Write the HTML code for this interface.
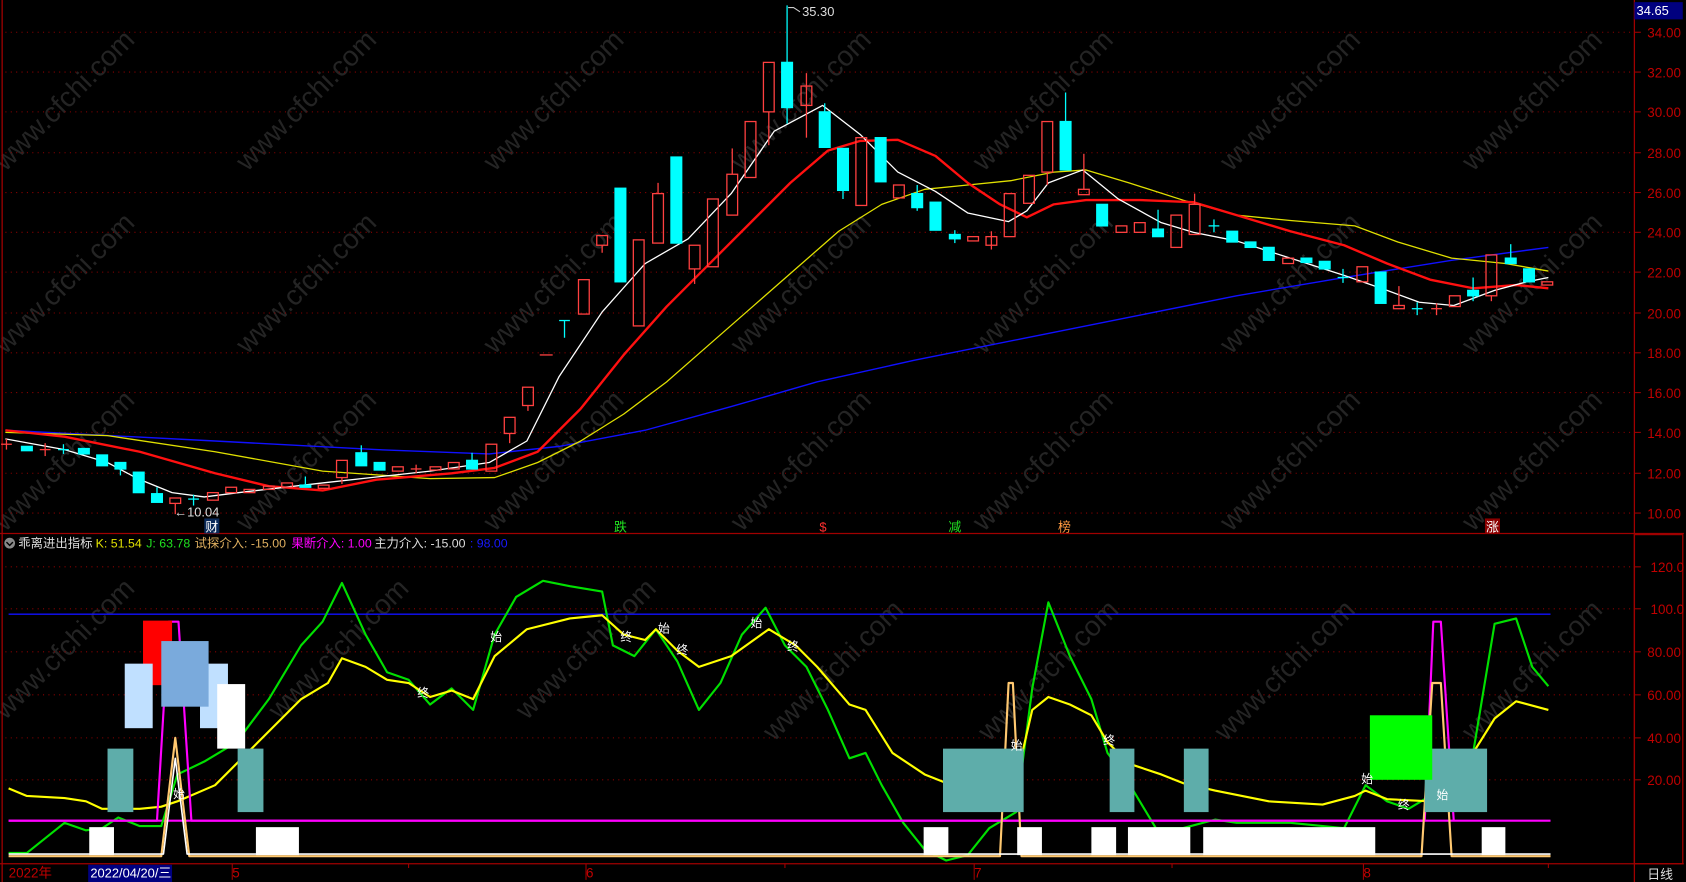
<!DOCTYPE html>
<html><head><meta charset="utf-8"><style>
html,body{margin:0;padding:0;background:#000;overflow:hidden}
svg{display:block}
text{font-family:"Liberation Sans","Noto Sans CJK SC",sans-serif}
</style></head><body>
<svg width="1686" height="882" viewBox="0 0 1568 820" preserveAspectRatio="none" xmlns="http://www.w3.org/2000/svg">
<rect width="1568" height="820" fill="#000"/>
<!-- watermarks -->
<g fill="#242424" font-size="26" font-family="Liberation Sans,sans-serif">
<text transform="translate(5,160) rotate(-45)">www.cfchi.com</text>
<text transform="translate(230,160) rotate(-45)">www.cfchi.com</text>
<text transform="translate(460,160) rotate(-45)">www.cfchi.com</text>
<text transform="translate(690,160) rotate(-45)">www.cfchi.com</text>
<text transform="translate(915,160) rotate(-45)">www.cfchi.com</text>
<text transform="translate(1145,160) rotate(-45)">www.cfchi.com</text>
<text transform="translate(1370,160) rotate(-45)">www.cfchi.com</text>
<text transform="translate(5,330) rotate(-45)">www.cfchi.com</text>
<text transform="translate(230,330) rotate(-45)">www.cfchi.com</text>
<text transform="translate(460,330) rotate(-45)">www.cfchi.com</text>
<text transform="translate(690,330) rotate(-45)">www.cfchi.com</text>
<text transform="translate(915,330) rotate(-45)">www.cfchi.com</text>
<text transform="translate(1145,330) rotate(-45)">www.cfchi.com</text>
<text transform="translate(1370,330) rotate(-45)">www.cfchi.com</text>
<text transform="translate(5,495) rotate(-45)">www.cfchi.com</text>
<text transform="translate(230,495) rotate(-45)">www.cfchi.com</text>
<text transform="translate(460,495) rotate(-45)">www.cfchi.com</text>
<text transform="translate(690,495) rotate(-45)">www.cfchi.com</text>
<text transform="translate(915,495) rotate(-45)">www.cfchi.com</text>
<text transform="translate(1145,495) rotate(-45)">www.cfchi.com</text>
<text transform="translate(1370,495) rotate(-45)">www.cfchi.com</text>
<text transform="translate(5,670) rotate(-45)">www.cfchi.com</text>
<text transform="translate(260,670) rotate(-45)">www.cfchi.com</text>
<text transform="translate(490,670) rotate(-45)">www.cfchi.com</text>
<text transform="translate(720,690) rotate(-45)">www.cfchi.com</text>
<text transform="translate(920,690) rotate(-45)">www.cfchi.com</text>
<text transform="translate(1140,690) rotate(-45)">www.cfchi.com</text>
<text transform="translate(1370,690) rotate(-45)">www.cfchi.com</text>
</g>
<!-- grid -->
<g stroke="#8b0000" stroke-width="1" stroke-dasharray="1,4">
<line x1="5" x2="1520" y1="30" y2="30"/><line x1="5" x2="1520" y1="67" y2="67"/><line x1="5" x2="1520" y1="104" y2="104"/><line x1="5" x2="1520" y1="142" y2="142"/><line x1="5" x2="1520" y1="179" y2="179"/><line x1="5" x2="1520" y1="216" y2="216"/><line x1="5" x2="1520" y1="253" y2="253"/><line x1="5" x2="1520" y1="291" y2="291"/><line x1="5" x2="1520" y1="328" y2="328"/><line x1="5" x2="1520" y1="365" y2="365"/><line x1="5" x2="1520" y1="402" y2="402"/><line x1="5" x2="1520" y1="440" y2="440"/><line x1="5" x2="1520" y1="477" y2="477"/>
<line x1="5" x2="1520" y1="527" y2="527"/><line x1="5" x2="1520" y1="566" y2="566"/><line x1="5" x2="1520" y1="606" y2="606"/><line x1="5" x2="1520" y1="646" y2="646"/><line x1="5" x2="1520" y1="686" y2="686"/><line x1="5" x2="1520" y1="725" y2="725"/>
</g>
<!-- frame -->
<g stroke="#a00000" fill="none" stroke-width="1.2">
<line x1="2" y1="0" x2="2" y2="820"/>
<line x1="1520" y1="0" x2="1520" y2="820"/>
<line x1="0" y1="496" x2="1566" y2="496"/>
<line x1="0" y1="803" x2="1566" y2="803"/>
<rect x="1520" y="497" width="45" height="306"/>
</g>
<g stroke="#a00000">
<line x1="1520" x2="1526" y1="30" y2="30"/><line x1="1520" x2="1526" y1="67" y2="67"/><line x1="1520" x2="1526" y1="104" y2="104"/><line x1="1520" x2="1526" y1="142" y2="142"/><line x1="1520" x2="1526" y1="179" y2="179"/><line x1="1520" x2="1526" y1="216" y2="216"/><line x1="1520" x2="1526" y1="253" y2="253"/><line x1="1520" x2="1526" y1="291" y2="291"/><line x1="1520" x2="1526" y1="328" y2="328"/><line x1="1520" x2="1526" y1="365" y2="365"/><line x1="1520" x2="1526" y1="402" y2="402"/><line x1="1520" x2="1526" y1="440" y2="440"/><line x1="1520" x2="1526" y1="477" y2="477"/>
<line x1="1520" x2="1526" y1="527" y2="527"/><line x1="1520" x2="1526" y1="566" y2="566"/><line x1="1520" x2="1526" y1="606" y2="606"/><line x1="1520" x2="1526" y1="646" y2="646"/><line x1="1520" x2="1526" y1="686" y2="686"/><line x1="1520" x2="1526" y1="725" y2="725"/>
<line x1="216" x2="216" y1="803" y2="818"/><line x1="545" x2="545" y1="803" y2="818"/><line x1="906" x2="906" y1="803" y2="818"/><line x1="1268" x2="1268" y1="803" y2="818"/>
<line x1="380" x2="380" y1="803" y2="807"/><line x1="730" x2="730" y1="803" y2="807"/><line x1="1090" x2="1090" y1="803" y2="807"/><line x1="1440" x2="1440" y1="803" y2="807"/>
</g>
<!-- axis labels -->
<g fill="#c00000" font-size="12.5">
<text x="1532" y="35">34.00</text><text x="1532" y="72">32.00</text><text x="1532" y="109">30.00</text><text x="1532" y="147">28.00</text><text x="1532" y="184">26.00</text><text x="1532" y="221">24.00</text><text x="1532" y="258">22.00</text><text x="1532" y="296">20.00</text><text x="1532" y="333">18.00</text><text x="1532" y="370">16.00</text><text x="1532" y="407">14.00</text><text x="1532" y="445">12.00</text><text x="1532" y="482">10.00</text>
<text x="1535" y="532">120.0</text><text x="1535" y="571">100.0</text><text x="1532" y="611">80.00</text><text x="1532" y="651">60.00</text><text x="1532" y="691">40.00</text><text x="1532" y="730">20.00</text>
<text x="8" y="816">2022年</text><text x="216" y="816">5</text><text x="545" y="816">6</text><text x="906" y="816">7</text><text x="1268" y="816">8</text>
</g>
<rect x="1520" y="2" width="45" height="16" fill="#00007f"/>
<text x="1522" y="14" fill="#fff" font-size="12">34.65</text>
<rect x="82" y="804" width="78" height="16" fill="#000080"/>
<text x="84" y="816" fill="#fff" font-size="12">2022/04/20/三</text>
<text x="1532" y="817" fill="#ddd" font-size="12">日线</text>

<!-- MAs -->
<g fill="none" stroke-linejoin="round">
<polyline stroke="#1010ff" stroke-width="1.3" points="5,400 200,410 350,418 455,422 520,415 600,400 680,378 760,355 850,335 950,315 1050,295 1150,275 1250,258 1350,242 1440,230"/>
<polyline stroke="#e0e000" stroke-width="1.2" points="5,402 100,405 200,420 300,438 400,445 460,444 500,430 540,410 580,385 620,355 660,320 700,285 740,250 780,215 820,190 860,176 900,172 940,168 980,160 1010,158 1050,170 1100,186 1150,200 1200,205 1260,210 1300,225 1350,240 1400,245 1440,252"/>
<polyline stroke="#ff1010" stroke-width="2.2" points="5,400 60,406 130,420 200,440 250,452 300,456 350,446 420,440 460,435 500,420 540,380 580,330 620,285 660,245 700,205 735,170 770,140 800,131 835,130 870,145 900,170 930,190 955,202 980,190 1010,186 1060,186 1110,188 1150,200 1200,215 1250,228 1290,245 1330,260 1370,268 1410,265 1440,268"/>
<polyline stroke="#ffffff" stroke-width="1.2" points="5,408 60,418 100,430 128,445 160,458 190,462 230,457 300,449 400,438 455,430 490,410 520,350 560,290 600,245 640,222 680,180 720,122 765,98 800,125 835,160 870,178 900,198 938,206 955,196 975,170 1007,158 1040,185 1080,207 1110,216 1150,224 1200,240 1250,256 1290,270 1320,281 1352,284 1390,270 1420,262 1440,258"/>
</g>

<!-- candles -->
<g stroke-width="1.2">
<g stroke="#ff4040" fill="none">
<line x1="6" y1="408" x2="6" y2="418"/><line x1="1" y1="413" x2="11" y2="413"/>
<line x1="42" y1="412" x2="42" y2="424"/><line x1="37" y1="418" x2="47" y2="418"/>
<line x1="163" y1="468" x2="163" y2="478"/><rect x="158" y="463" width="10" height="5"/>
<rect x="193" y="458" width="10" height="7"/><rect x="210" y="453" width="10" height="5"/><rect x="227" y="455" width="10" height="3"/><rect x="245" y="452" width="10" height="3"/><rect x="262" y="449" width="10" height="4"/><rect x="296" y="451" width="10" height="3"/>
<rect x="313" y="428" width="10" height="16"/><line x1="318" y1="444" x2="318" y2="450"/>
<rect x="365" y="434" width="10" height="4"/><line x1="382" y1="436" x2="392" y2="436"/><line x1="387" y1="432" x2="387" y2="440"/><rect x="400" y="434" width="10" height="3"/><rect x="417" y="430" width="10" height="6"/>
<rect x="452" y="413" width="10" height="25"/><rect x="469" y="388" width="10" height="15"/><line x1="474" y1="403" x2="474" y2="412"/>
<rect x="486" y="360" width="10" height="17"/><line x1="491" y1="377" x2="491" y2="382"/>
<line x1="502" y1="330" x2="514" y2="330"/>
<rect x="538" y="260" width="10" height="32"/><rect x="555" y="219" width="10" height="9"/><line x1="560" y1="228" x2="560" y2="235"/>
<rect x="589" y="223" width="10" height="80"/><rect x="607" y="180" width="10" height="46"/><line x1="612" y1="170" x2="612" y2="180"/>
<rect x="641" y="228" width="10" height="22"/><line x1="646" y1="250" x2="646" y2="264"/>
<rect x="658" y="185" width="10" height="63"/><rect x="676" y="162" width="10" height="38"/><line x1="681" y1="138" x2="681" y2="162"/>
<rect x="693" y="113" width="10" height="52"/><rect x="710" y="58" width="10" height="46"/><line x1="715" y1="104" x2="715" y2="135"/>
<rect x="745" y="80" width="10" height="18"/><line x1="750" y1="68" x2="750" y2="128"/>
<rect x="796" y="128" width="10" height="63"/><rect x="831" y="172" width="10" height="12"/>
<rect x="900" y="220" width="10" height="4"/><rect x="917" y="220" width="10" height="8"/><line x1="922" y1="215" x2="922" y2="232"/>
<rect x="934" y="180" width="10" height="40"/><rect x="952" y="163" width="10" height="26"/>
<rect x="969" y="113" width="10" height="47"/><line x1="974" y1="160" x2="974" y2="172"/>
<rect x="1003" y="176" width="10" height="5"/><line x1="1008" y1="143" x2="1008" y2="176"/>
<rect x="1038" y="210" width="10" height="6"/><rect x="1055" y="207" width="10" height="9"/><rect x="1089" y="200" width="10" height="30"/><rect x="1106" y="190" width="10" height="28"/><line x1="1111" y1="180" x2="1111" y2="190"/>
<rect x="1193" y="240" width="10" height="5"/><rect x="1262" y="248" width="10" height="14"/>
<rect x="1296" y="284" width="10" height="3"/><line x1="1301" y1="266" x2="1301" y2="284"/>
<line x1="1331" y1="287" x2="1341" y2="287"/><line x1="1336" y1="282" x2="1336" y2="293"/>
<rect x="1348" y="275" width="10" height="10"/><rect x="1382" y="237" width="10" height="38"/><line x1="1387" y1="275" x2="1387" y2="280"/>
<rect x="1434" y="262" width="10" height="3"/>
</g>
<g fill="#00ffff" stroke="#00ffff">
<rect x="20" y="415" width="10" height="4"/><line x1="54" y1="418" x2="64" y2="418"/><line x1="59" y1="413" x2="59" y2="422"/>
<rect x="73" y="417" width="10" height="5"/><rect x="90" y="423" width="10" height="10"/><rect x="107" y="430" width="10" height="6"/><line x1="112" y1="436" x2="112" y2="442"/>
<rect x="124" y="439" width="10" height="19"/><rect x="141" y="459" width="10" height="8"/><line x1="146" y1="453" x2="146" y2="459"/>
<line x1="175" y1="464" x2="185" y2="464"/><line x1="180" y1="460" x2="180" y2="470"/>
<rect x="279" y="451" width="10" height="2"/><line x1="284" y1="443" x2="284" y2="451"/>
<rect x="331" y="421" width="10" height="12"/><line x1="336" y1="414" x2="336" y2="421"/>
<rect x="348" y="430" width="10" height="7"/><rect x="434" y="428" width="10" height="8"/><line x1="439" y1="421" x2="439" y2="428"/>
<line x1="520" y1="298" x2="530" y2="298"/><line x1="525" y1="298" x2="525" y2="314"/>
<rect x="572" y="175" width="10" height="87"/><rect x="624" y="146" width="10" height="80"/>
<rect x="727" y="58" width="10" height="42"/><line x1="732" y1="5" x2="732" y2="115"/>
<rect x="762" y="104" width="10" height="33"/><line x1="767" y1="96" x2="767" y2="104"/>
<rect x="779" y="138" width="10" height="39"/><line x1="784" y1="177" x2="784" y2="185"/>
<rect x="814" y="128" width="10" height="41"/><rect x="848" y="180" width="10" height="13"/><line x1="853" y1="172" x2="853" y2="196"/>
<rect x="865" y="188" width="10" height="26"/><rect x="883" y="218" width="10" height="4"/><line x1="888" y1="214" x2="888" y2="226"/>
<rect x="986" y="113" width="10" height="45"/><line x1="991" y1="86" x2="991" y2="113"/>
<rect x="1020" y="190" width="10" height="20"/><rect x="1072" y="213" width="10" height="7"/><line x1="1077" y1="195" x2="1077" y2="213"/>
<line x1="1124" y1="210" x2="1134" y2="210"/><line x1="1129" y1="204" x2="1129" y2="216"/>
<rect x="1141" y="215" width="10" height="10"/><rect x="1158" y="225" width="10" height="5"/><rect x="1175" y="230" width="10" height="12"/>
<rect x="1210" y="240" width="10" height="4"/><rect x="1227" y="243" width="10" height="7"/>
<line x1="1244" y1="258" x2="1254" y2="258"/><line x1="1249" y1="250" x2="1249" y2="263"/>
<rect x="1279" y="253" width="10" height="29"/><line x1="1313" y1="287" x2="1323" y2="287"/><line x1="1318" y1="281" x2="1318" y2="293"/>
<rect x="1365" y="270" width="10" height="5"/><line x1="1370" y1="258" x2="1370" y2="280"/>
<rect x="1400" y="240" width="10" height="5"/><line x1="1405" y1="227" x2="1405" y2="240"/>
<rect x="1417" y="250" width="10" height="12"/>
</g>
</g>
<!-- peak/low labels -->
<polyline points="733,7 738,7 744,11" stroke="#ccc" fill="none"/>
<text x="746" y="15" fill="#ddd" font-size="12">35.30</text>
<text x="162" y="480" fill="#ddd" font-size="12">←10.04</text>
<!-- event markers -->
<rect x="190" y="482" width="14" height="14" fill="#0a2a5a"/><text x="191" y="494" fill="#fff" font-size="12">财</text>
<text x="571" y="494" fill="#20e020" font-size="12">跌</text>
<text x="762" y="494" fill="#ff3030" font-size="12">$</text>
<text x="882" y="494" fill="#20e020" font-size="12">减</text>
<text x="984" y="494" fill="#ff9a40" font-size="12">榜</text>
<rect x="1381" y="482" width="14" height="14" fill="#8b0000"/><text x="1382" y="494" fill="#fff" font-size="12">涨</text>

<!-- legend -->
<circle cx="9" cy="505" r="5" fill="#888"/><polyline points="6,504 9,507 12,504" stroke="#000" fill="none" stroke-width="1.3"/>
<text y="509" font-size="11.5"><tspan x="17" fill="#ddd">乖离进出指标</tspan><tspan x="89" fill="#e0e000">K: 51.54</tspan><tspan x="136" fill="#20e020">J: 63.78</tspan><tspan x="181" fill="#e0b060">试探介入: -15.00</tspan><tspan x="271" fill="#ff00ff">果断介入: 1.00</tspan><tspan x="348" fill="#ddd">主力介入: -15.00</tspan><tspan x="437" fill="#1818ff">: 98.00</tspan></text>

<!-- sub panel -->
<line x1="8" y1="571" x2="1442" y2="571" stroke="#1010ff" stroke-width="1.3"/>
<line x1="8" y1="763" x2="1442" y2="763" stroke="#ff00ff" stroke-width="2"/>
<g fill="none" stroke-width="2" stroke-linejoin="round">
<polyline stroke="#00e000" points="8,793 25,793 60,765 80,772 95,770 110,760 130,768 150,768 165,720 190,708 220,690 250,650 280,600 300,578 318,542 340,590 360,625 380,632 400,655 420,640 440,660 460,590 480,555 505,540 530,545 560,550 570,600 590,610 610,585 630,615 650,660 670,635 690,590 712,565 730,600 750,620 770,660 790,705 805,700 820,730 840,765 860,790 880,800 900,795 920,770 945,755 960,640 975,560 995,610 1015,650 1030,700 1045,720 1060,745 1075,770 1100,770 1130,762 1150,765 1200,765 1250,770 1270,730 1290,745 1310,752 1330,740 1350,720 1370,700 1390,580 1410,575 1425,620 1440,638"/>
<polyline stroke="#ffff00" points="8,733 25,740 60,742 80,745 95,752 110,752 130,752 150,750 165,745 200,730 240,690 280,650 305,635 318,612 340,620 360,632 380,635 400,648 420,642 440,650 460,610 490,585 530,575 560,572 580,590 600,595 610,585 630,605 650,620 680,610 715,585 740,600 760,620 790,655 805,660 830,700 860,720 880,728 900,730 920,725 945,725 960,660 975,648 995,655 1015,665 1030,690 1050,710 1080,720 1100,728 1130,735 1180,745 1230,748 1260,740 1270,735 1290,743 1330,745 1350,730 1370,700 1390,668 1410,652 1440,660"/>
<polyline stroke="#ff00ff" points="8,763 146,763 157,578 166,578 178,763 1325,763 1333,578 1340,578 1352,763"/>
<polyline stroke="#ffc870" points="8,796 150,796 163,686 176,796 930,796 938,635 942,635 950,796 1322,796 1332,635 1340,635 1350,796 1442,796"/>
<polyline stroke="#ffffff" stroke-width="1.5" points="8,794 152,794 163,705 174,794 1442,794"/>
</g>
<!-- blocks -->
<rect x="133" y="577" width="27" height="60" fill="#ff0000"/>
<rect x="116" y="617" width="26" height="60" fill="#c0e0ff"/>
<rect x="186" y="617" width="26" height="60" fill="#c0e0ff"/>
<rect x="150" y="596" width="44" height="61" fill="#7aaadc"/>
<rect x="202" y="636" width="26" height="60" fill="#ffffff"/>
<g fill="#5eadaa">
<rect x="100" y="696" width="24" height="59"/><rect x="221" y="696" width="24" height="59"/>
<rect x="877" y="696" width="75" height="59"/><rect x="1032" y="696" width="23" height="59"/><rect x="1101" y="696" width="23" height="59"/>
<rect x="1325" y="696" width="58" height="59"/>
</g>
<rect x="1274" y="665" width="58" height="60" fill="#00ff00"/>
<g fill="#fff">
<rect x="83" y="769" width="23" height="26"/><rect x="238" y="769" width="40" height="26"/><rect x="859" y="769" width="23" height="26"/><rect x="946" y="769" width="23" height="26"/><rect x="1015" y="769" width="23" height="26"/><rect x="1049" y="769" width="58" height="26"/><rect x="1119" y="769" width="160" height="26"/><rect x="1378" y="769" width="22" height="26"/>
</g>
<g fill="#fff" font-size="11">
<text x="161" y="742">始</text><text x="456" y="596">始</text><text x="388" y="648">终</text><text x="577" y="596">终</text><text x="612" y="588">始</text><text x="629" y="608">终</text><text x="698" y="583">始</text><text x="732" y="605">终</text><text x="940" y="697">始</text><text x="1026" y="692">终</text><text x="1266" y="728">始</text><text x="1300" y="752">终</text><text x="1336" y="743">始</text>
</g>
</svg>
</body></html>
